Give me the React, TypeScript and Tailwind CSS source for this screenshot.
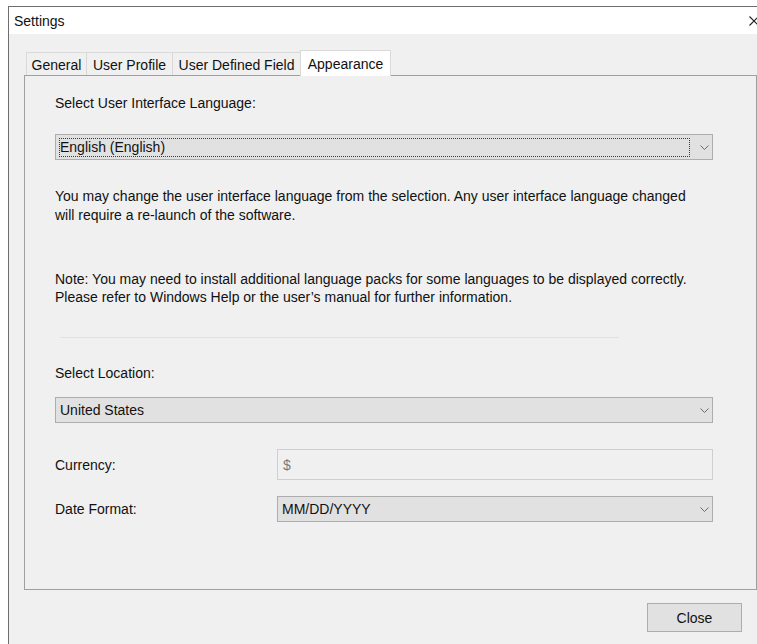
import { ReactNode } from "react"

const tabs = [
    { label: "General", width: "w-[60px]" },
    { label: "User Profile", width: "w-[86px]" },
    { label: "User Defined Field", width: "w-[128px]" },
]

function Chevron() {
    return (
        <svg width="9" height="5" viewBox="0 0 9 5" className="shrink-0">
            <path d="M0.5 0.5 L4.5 4.5 L8.5 0.5" fill="none" stroke="#6b6b6b" strokeWidth="1" />
        </svg>
    )
}

function Dropdown({ children, className }: { children: ReactNode; className?: string }) {
    return (
        <div className={`flex items-center h-[26px] bg-[#e1e1e1] border border-[#adadad] pl-[4px] pr-[3px] ${className ?? ""}`}>
            <span className="flex-1 leading-[16px]">{children}</span>
            <Chevron />
        </div>
    )
}

function Row({ label, children }: { label: string; children: ReactNode }) {
    return (
        <div className="flex items-center">
            <span className="w-[222px] leading-[16px]">{label}</span>
            <div className="flex-1">{children}</div>
        </div>
    )
}

export default function App() {
    return (
        <div
            className="w-[757px] h-[644px] bg-white overflow-hidden text-[14px] text-[#111]"
            style={{ fontFamily: '"Liberation Sans", Arial, sans-serif' }}
        >
            <div className="ml-[8px] mt-[6px] w-[749px] h-[638px] border-l border-t border-[#6e6e6e] flex flex-col">
                {/* title bar */}
                <div className="h-[27px] bg-white flex items-center justify-between pl-[5px]">
                    <span className="leading-[16px]">Settings</span>
                    <svg width="10" height="10" viewBox="0 0 10 10" className="mr-[-2px]">
                        <path d="M0.5 0.5 L9.5 9.5 M9.5 0.5 L0.5 9.5" stroke="#222" strokeWidth="1.1" />
                    </svg>
                </div>

                {/* dialog body */}
                <div className="flex-1 bg-[#f0f0f0] pt-[16px] pl-[15px]">
                    <div className="w-[733px] flex flex-col">
                        <div className="flex items-end h-[25px] pl-[2px]">
                            {tabs.map((tab, i) => (
                                <div
                                    key={i}
                                    className={`${tab.width} h-[23px] flex items-center justify-center border-t border-l border-[#d9d9d9] leading-[16px] pt-[2px]`}
                                >
                                    {tab.label}
                                </div>
                            ))}
                            <div className="w-[91px] h-[26px] mb-[-1px] relative z-10 bg-white flex items-start justify-center pt-[5px] border-t border-l border-r border-[#d9d9d9] leading-[16px]">
                                Appearance
                            </div>
                        </div>

                        <div className="h-[515px] border border-[#a0a0a0] pl-[30px] pr-[43px] pt-[19px] flex flex-col">
                            <span className="leading-[16px]">Select User Interface Language:</span>

                            <div className="mt-[23px] flex items-center h-[26px] bg-[#e1e1e1] border border-[#adadad] pl-[3px] pr-[3px]">
                                <div className="flex-1 h-[19px] mr-[10px] border border-dotted border-[#3a3a3a] flex items-center">
                                    <span className="leading-[16px]">English (English)</span>
                                </div>
                                <Chevron />
                            </div>

                            <p className="mt-[27px] leading-[19px]">
                                You may change the user interface language from the selection. Any user interface language changed
                                <br />
                                will require a re-launch of the software.
                            </p>

                            <p className="mt-[45px] leading-[18px]">
                                Note: You may need to install additional language packs for some languages to be displayed correctly.
                                <br />
                                Please refer to Windows Help or the user’s manual for further information.
                            </p>

                            <div className="mt-[31px] ml-[5px] w-[559px] h-px bg-[#dde2e7]" />

                            <span className="mt-[27px] leading-[16px]">Select Location:</span>

                            <Dropdown className="mt-[16px]">United States</Dropdown>

                            <div className="mt-[26px]">
                                <Row label="Currency:">
                                    <div className="h-[31px] border border-[#cfcfcf] bg-[#f0f0f0] flex items-center pl-[5px] text-[#7a7a7a] leading-[16px]">
                                        $
                                    </div>
                                </Row>
                            </div>

                            <div className="mt-[16px]">
                                <Row label="Date Format:">
                                    <Dropdown>MM/DD/YYYY</Dropdown>
                                </Row>
                            </div>
                        </div>

                        <button className="self-end mt-[13px] mr-[15px] w-[95px] h-[29px] bg-[#e1e1e1] border border-[#adadad] leading-[16px]">
                            Close
                        </button>
                    </div>
                </div>
            </div>
        </div>
    )
}
